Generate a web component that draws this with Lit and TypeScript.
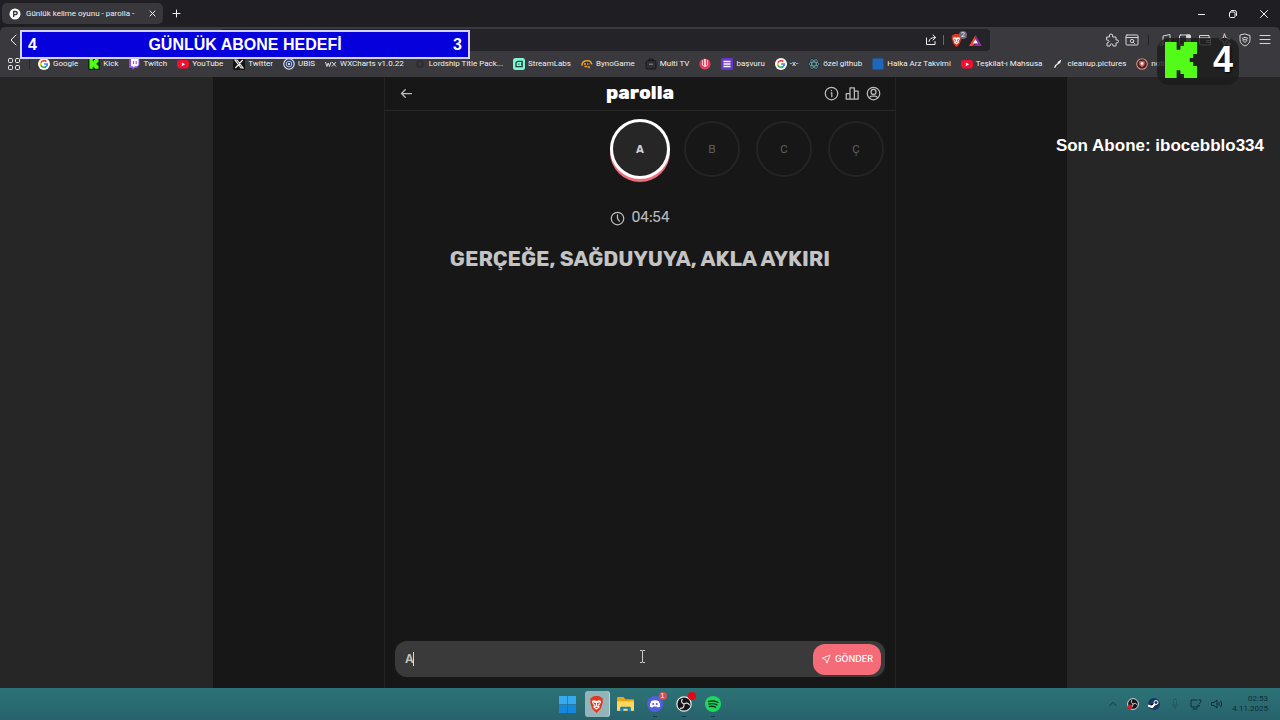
import { LitElement, html, css, svg, nothing } from "lit";
import { customElement, property } from "lit/decorators.js";

const line = (body: unknown, size = 16, box = 24, width = 2) => html`<svg width=${size} height=${size} viewBox="0 0 ${box} ${box}" fill="none" stroke="currentColor" stroke-width=${width} stroke-linecap="round" stroke-linejoin="round" aria-hidden="true">${body}</svg>`;
const art = (body: unknown, size = 12, box = 12) => html`<svg width=${size} height=${size} viewBox="0 0 ${box} ${box}" aria-hidden="true">${body}</svg>`;

const kickShape = svg`<path fill="#53fc18" d="M0 0h4v2.600h1.300V1.300h1.200V0H11v4H9.700v1.300H8.500v1.400h1.200V8H11v4H6.500v-1.300H5.300V9.400H4V12H0z"/>`;
const google = svg`<circle cx="6" cy="6" r="6" fill="#fff"/><g fill="none" stroke-width="1.7"><path stroke="#ea4335" d="M3 4.6A3.3 3.3 0 0 1 8.3 3.6"/><path stroke="#fbbc05" d="M3 4.5A3.4 3.4 0 0 0 3 7.5"/><path stroke="#34a853" d="M3 7.4A3.3 3.3 0 0 0 8.2 8.5"/><path stroke="#4285f4" d="M6.1 6h3.2A3.2 3.2 0 0 1 8.1 8.6"/></g>`;
const youtube = svg`<rect y="2" width="12" height="8.5" rx="2.4" fill="#f01030"/><path d="M4.9 4.4v3.8L8 6.3z" fill="#fff"/>`;

const favicons: Record<string, unknown> = {
  google,
  kick: svg`<rect width="12" height="12" rx="1" fill="#102a0c"/><g transform="translate(1.500 1) scale(.82)">${kickShape}</g>`,
  twitch: svg`<path fill="#9147ff" d="M1.5 0h10v7.3L8.7 10H6.6l-2 2v-2H1V2z"/><path fill="#fff" d="M3 1h7.5v5.7L9 8.2H7L5.4 9.7V8.2H3z"/><path stroke="#9147ff" stroke-width="1.1" d="M5.5 3v3M8.2 3v3"/>`,
  youtube,
  x: svg`<rect width="12" height="12" rx="1.5" fill="#141414"/><path stroke="#eee" stroke-width="1.2" fill="none" d="M2 2h2l6 8H8zM9.7 2 2.4 10"/>`,
  ubis: svg`<circle cx="6" cy="6" r="5.2" fill="#2c3a66" stroke="#e6e8f0" stroke-width="1.1"/><circle cx="6" cy="6" r="2.8" fill="none" stroke="#b9c4e4" stroke-width="1"/><circle cx="6" cy="6" r="1.1" fill="#fff"/>`,
  wx: svg`<path fill="none" stroke="#ddd" stroke-width="1" d="M.5 4l1.4 4.5L3.2 5l1.3 3.5L6 4M7 4l4 4.5M11 4 7 8.5"/>`,
  dim: svg`<circle cx="6" cy="6" r="3" fill="none" stroke="#2c2c30" stroke-width="1.5"/>`,
  streamlabs: svg`<rect width="12" height="12" rx="2.5" fill="#80f5d2"/><path fill="none" stroke="#17453e" stroke-width="1.3" d="M3 8.7V5.5Q3 3.4 5.4 3.4h3.8v5.3zM5.4 6.2h1M8 6.2h.7"/>`,
  byno: svg`<path fill="none" stroke="#f0a02c" stroke-width="1.5" d="M1 7.8Q.8 3.2 5.4 2.8 9.9 2 10.8 6.4M3 6h6M3.5 8.4h3M8 8v2.2"/><path stroke="#222" d="M5.5 4v3M8 4v3"/>`,
  multitv: svg`<rect x="1" y="2.7" width="10" height="8.3" rx="1.5" fill="#303034" stroke="#161618"/><path fill="none" stroke="#161618" d="M4 2.7V1h4v1.7"/><path stroke="#909094" d="M4 6.2h4"/>`,
  pink: svg`<circle cx="6" cy="6" r="5.6" fill="#dc415c"/><path stroke="#fff" stroke-width="1.4" d="M6 1v7"/><path fill="none" stroke="#ffc4cd" d="M3.5 2.3v4.9q2.5 3 5 0V2.3"/>`,
  form: svg`<rect width="12" height="12" rx="1.5" fill="#6936c7"/><path stroke="#fff" stroke-width="1.3" d="M2.5 3.5h7M2.5 6h7M2.5 8.5h7"/>`,
  react: svg`<rect width="12" height="12" rx="6" fill="#213438"/><g fill="none" stroke="#6f9ca5" stroke-width=".8"><ellipse cx="6" cy="6" rx="5" ry="2"/><ellipse cx="6" cy="6" rx="5" ry="2" transform="rotate(60 6 6)"/><ellipse cx="6" cy="6" rx="5" ry="2" transform="rotate(120 6 6)"/></g>`,
  blue: svg`<rect x=".5" y=".5" width="11" height="11" fill="#1d67bd"/>`,
  brush: svg`<path fill="#eee" d="m2 10 1-2.8 2.2-1.8 1-1.8 3.2-2L8.2 5 4.7 7.3 3.6 9.6z"/>`,
  noti: svg`<circle cx="6" cy="6" r="5.3" fill="#39282b" stroke="#d58b81" stroke-width="1.1"/><path fill="#ef6c64" d="M3.4 3.2h5.2v3.6L6 9.2 3.4 6.8z"/><circle cx="6" cy="5.5" r="1.2" fill="#fff"/>`,
};

const bookmarks: [string, string][] = [
  ["google", "Google"], ["kick", "Kick"], ["twitch", "Twitch"], ["youtube", "YouTube"], ["x", "Twitter"],
  ["ubis", "UBIS"], ["wx", "WXCharts v1.0.22"], ["dim", "Lordship Title Pack..."], ["streamlabs", "StreamLabs"],
  ["byno", "BynoGame"], ["multitv", "Multi TV"], ["pink", ""], ["form", "başvuru"], ["google", "-x-"],
  ["react", "özel github"], ["blue", "Halka Arz Takvimi"], ["youtube", "Teşkilat-ı Mahsusa"],
  ["brush", "cleanup.pictures"], ["noti", "notify ve Se"],
];

const lion = svg`<path fill="#e5371f" d="m4 1 2-1h4l2 1 2 1.6-.4 2 .4 1.2-2 6.2L8 16l-4-4-2-6.2.4-1.2-.4-2z"/><path fill="#fff" d="m4 4.4 2-.5 2 .7 2-.7 2 .5.2 1.8L10.4 9l.6 1.5L8 13l-3-2.5L5.6 9 3.8 6.2z"/><path fill="none" stroke="#e5371f" d="m5 6.4 2 .8-.4 2M11 6.4l-2 .8.4 2M7 10.7h2"/>`;

@customElement("browser-chrome")
export class BrowserChrome extends LitElement {
  static styles = css`
    :host { display: block; min-width: 0; background: #1f1e23; color: #f1f1f2; font: 8px/12px Roboto, "Open Sans", sans-serif; }
    button { background: none; border: 0; padding: 0; color: inherit; font: inherit; display: grid; place-items: center; }
    svg { display: block; flex: none; }
    .strip { display: flex; align-items: center; height: 27px; padding: 0 2px; gap: 9px; }
    .tab { display: flex; align-items: center; gap: 5px; width: 161px; height: 21px; box-sizing: border-box; padding: 0 6px 0 7px; background: #38373b; border-radius: 5px; }
    .name { flex: 1; white-space: nowrap; overflow: hidden; }
    .window { margin-left: auto; display: flex; gap: 19px; padding-right: 8px; }
    .tools { background: #3a393d; border-radius: 5px 5px 0 0; height: 50px; }
    .row { display: flex; align-items: center; height: 26px; padding: 0 8px; }
    .address { display: flex; align-items: center; gap: 6px; flex: 1; min-width: 0; height: 22px; margin-left: 200px; background: #242328; border-radius: 4px; box-sizing: border-box; padding-right: 8px; }
    .url { flex: 1; min-width: 0; background: none; border: 0; outline: 0; color: inherit; font: inherit; }
    .sep { width: 1px; height: 10px; background: #67666b; }
    .shield { position: relative; }
    .count { position: absolute; top: -3px; right: -4px; width: 8px; height: 8px; border-radius: 4px; background: #686d83; font-size: 7px; line-height: 8px; text-align: center; }
    .extensions { display: flex; align-items: center; gap: 6px; margin-left: 115px; color: #d6d6d8; }
    .extensions .sep { background: #242428; margin: 0 3px; }
    .bookmarks { display: flex; align-items: center; gap: 10px; height: 21px; padding: 0 7px; white-space: nowrap; overflow: hidden; }
    .bookmarks a { display: flex; align-items: center; gap: 3px; color: inherit; text-decoration: none; }
    .divider { width: 1px; height: 10px; background: #29292d; margin: 0 -2px; }
  `;
  render() {
    return html`
      <div class="strip">
        <div class="tab">${art(svg`<circle cx="6" cy="6" r="5.5" fill="#fff"/><path fill="none" stroke="#333" stroke-width="1.3" d="M4.7 9V3.5h1.5q2 0 2 1.6t-2 1.6H4.7"/>`)}
          <span class="name">Günlük kelime oyunu - parolla -</span>
          <button aria-label="Sekmeyi kapat">${line(svg`<path d="m2 2 5 5M7 2 2 7"/>`, 9, 9, 1)}</button>
        </div>
        <button aria-label="Yeni sekme">${line(svg`<path d="M4.5 1v7M1 4.5h7"/>`, 9, 9, 1)}</button>
        <div class="window">
          <button aria-label="Simge durumuna küçült">${line(svg`<path d="M2.500 6.500h6"/>`, 12, 12, 1)}</button>
          <button aria-label="Önceki boyut">${line(svg`<rect x="2.5" y="4" width="5.5" height="5.5" rx="1"/><path d="M4.5 2.5h3q2 0 2 2v3"/>`, 12, 12, 1)}</button>
          <button aria-label="Kapat">${line(svg`<path d="m2.5 2.5 7 7M9.5 2.5l-7 7"/>`, 12, 12, 1)}</button>
        </div>
      </div>
      <div class="tools">
        <div class="row">
          <button aria-label="Geri">${line(svg`<path d="M8 1 3 6l5 5"/>`, 12, 12, 1)}</button>
          <div class="address">
            <input class="url" aria-label="Adres çubuğu" />
            ${line(svg`<path d="M1.5 4v6.5H10V7.5M4 7.5q.3-4 6-4M8 1l2.7 2.5L8 6"/>`, 12, 12, 1)}
            <span class="sep"></span>
            <button class="shield" aria-label="Kalkanlar">${art(lion, 13, 16)}<span class="count">2</span></button>
            <button aria-label="Ödüller">${art(svg`<path fill="#f1482b" d="M6.5 1 0 12h4l2.7-5z"/><path fill="#8b2ca2" d="M6.5 1 13 12 4 12l2.5-2h2.7L6.5 5z"/><path fill="#fff" d="m6.5 5.3 2.6 4.3H3.9z"/>`, 13, 13)}</button>
          </div>
          <div class="extensions">
            ${line(svg`<path d="M2 4h2.5q-1-3 1.5-3t1.6 3H11v3q2.5-.7 2.5 1.3T11 10v3H8q.3-2.2-1.4-2.2T5 13H2v-3q2 0 2-1.6T2 7z"/>`, 14, 14, 1)}
            ${line(svg`<rect x="1" y="2" width="12" height="10" rx="1"/><path d="M1 4.5h12"/><circle cx="7" cy="8" r="1.7"/><path d="m8.5 9.5 1 1"/>`, 14, 14, 1)}
            <span class="sep"></span>
            ${line(svg`<path d="M5 11V3l7-1.5v8.3"/><circle cx="3.5" cy="11" r="1.6"/><circle cx="10.5" cy="10" r="1.6"/>`, 14, 14, 1)}
            ${line(svg`<rect x="1.5" y="2" width="11" height="10" rx="1"/><path fill="currentColor" d="M9 2h3v10H9z"/>`, 14, 14, 1)}
            ${line(svg`<path d="M2 2.5h9V5h1.5v7h-9Q1.5 12 1.5 10V3M2 5h9M9 7.5h3.5v2H9z"/>`, 14, 14, 1)}
            ${line(svg`<path d="M6.5 1 8 5l4 1.2L8 8l-1.5 4L5 8 1 6.2 5 5zM9 11h4M11 9v4"/>`, 14, 14, 1)}
            ${line(svg`<path d="m7 1 5 1.5v4Q12 11 7 13 2 11 2 6.5v-4z"/><path d="M4.3 5.2q2.7-2 5.4 0M5.2 6.7h3.6v1L7 9.6 5.2 7.7z"/>`, 14, 14, 1)}
            ${line(svg`<path d="M2 2.500h10M2 6.500h10M2 10.500h10"/>`, 14, 14, 1)}
          </div>
        </div>
        <nav class="bookmarks" aria-label="Yer imleri">
          <button aria-label="Tüm yer imleri">${line(svg`<rect x="1.500" y="1.500" width="4" height="4" rx="1"/><rect x="8.500" y="1.500" width="4" height="4" rx="1"/><rect x="1.500" y="8.500" width="4" height="4" rx="1"/><rect x="8.500" y="8.500" width="4" height="4" rx="1"/>`, 14, 14, 1)}</button>
          <span class="divider"></span>
          ${bookmarks.map(([icon, name]) => html`<a href="#" aria-label=${name || "Yer imi"}>${art(favicons[icon])}${name ? html`<span>${name}</span>` : nothing}</a>`)}
        </nav>
      </div>`;
  }
}

@customElement("letter-ring")
export class LetterRing extends LitElement {
  @property() letter = "";
  @property({ type: Boolean, reflect: true }) active = false;
  static styles = css`
    :host { display: grid; place-items: center; width: 72px; height: 64px; flex: none; }
    .ring { display: grid; place-items: center; width: 56px; height: 56px; box-sizing: border-box; border: 2px solid #242424; border-radius: 50%; font-size: 11px; color: #5c5c5c; }
    :host([active]) .ring { width: 60px; height: 60px; border: 3px solid #fff; background: #262626; color: #cfcfcf; font-weight: 700; box-shadow: 0 3px 0 #ef6b7b; }
  `;
  render() { return html`<span class="ring">${this.letter}</span>`; }
}

@customElement("parolla-game")
export class ParollaGame extends LitElement {
  static styles = css`
    :host { display: flex; justify-content: center; min-width: 0; background: #262626; color: #bdbdbd; font-family: Rubik, Inter, sans-serif; }
    svg { display: block; }
    .stage { display: flex; justify-content: center; width: 66.7%; background: #171717; }
    .panel { display: flex; flex-direction: column; width: 100%; max-width: 512px; box-sizing: border-box; border: solid #232323; border-width: 0 1px; }
    header { display: grid; grid-template-columns: 1fr auto 1fr; align-items: center; height: 34px; padding: 0 14px; border-bottom: 1px solid #262626; box-sizing: border-box; }
    h1 { margin: 0; padding-bottom: 2px; font-size: 19px; line-height: 20px; font-weight: 800; color: #fff; }
    header button { background: none; border: 0; padding: 0; color: inherit; justify-self: start; }
    .actions { display: flex; gap: 6px; justify-content: flex-end; }
    .letters { display: flex; padding: 6px 0 0 calc(50% - 36px); overflow: hidden; height: 70px; }
    .timer { display: flex; justify-content: center; align-items: center; gap: 6px; margin-top: 22px; font-size: 14px; line-height: 18px; }
    h2 { margin: 20px 0 0; text-align: center; font-size: 21px; line-height: 24px; font-weight: 700; color: #c4c4c4; }
    form { position: relative; display: flex; align-items: center; height: 36px; box-sizing: border-box; margin: auto 10px 11px; padding: 0 4px 0 10px; background: #3a3a3a; border-radius: 12px; }
    input { flex: 1; min-width: 0; background: none; border: 0; outline: 0; padding: 0; color: #c6c6c6; font: 600 12px/16px Inter, sans-serif; }
    .caret { position: absolute; left: 18px; top: 11px; width: 1px; height: 14px; background: #d8d8d8; }
    .send { display: flex; align-items: center; justify-content: center; gap: 4px; width: 68px; height: 31px; border: 0; border-radius: 12px; padding: 0; background: #f56b78; color: #fff; font: 500 9px/12px Inter, sans-serif; }
  `;
  render() {
    const letters = ["A", "B", "C", "Ç"];
    return html`<main class="stage"><div class="panel">
      <header>
        <button aria-label="Geri">${line(svg`<path d="M20 12H4M10 6l-6 6 6 6"/>`, 15)}</button>
        <h1>parolla</h1>
        <div class="actions">
          <button aria-label="Nasıl oynanır">${line(svg`<circle cx="12" cy="12" r="10"/><path d="M11.5 11h1v6M12 7v.5"/>`, 15)}</button>
          <button aria-label="İstatistikler">${line(svg`<path d="M2 21V12h6v9zM8 21V3h7v18zM15 21V8h6v13z"/>`, 15)}</button>
          <button aria-label="Profil">${line(svg`<circle cx="12" cy="12" r="10"/><circle cx="12" cy="9.5" r="4"/><path d="M5.5 19q1-3 4-3h5q3 0 4 3"/>`, 15)}</button>
        </div>
      </header>
      <div class="letters">${letters.map((l, i) => html`<letter-ring letter=${l} ?active=${i === 0}></letter-ring>`)}</div>
      <div class="timer">${line(svg`<circle cx="12" cy="12" r="10"/><path d="M12 6v6l3 4"/>`, 15)}<time>04:54</time></div>
      <h2>GERÇEĞE, SAĞDUYUYA, AKLA AYKIRI</h2>
      <form @submit=${(e: Event) => e.preventDefault()}>
        <input aria-label="Cevap" .value=${"A"} autocomplete="off" spellcheck="false" />
        <span class="caret"></span>
        <button class="send">${line(svg`<path d="M21 3 3 10l8 3 3 8z"/>`, 10)}GÖNDER</button>
      </form>
    </div></main>`;
  }
}

const obs = svg`<circle cx="10" cy="10" r="9" fill="#181519" stroke="#eee" stroke-width="1.5"/><g fill="none" stroke="#ddd" stroke-width="1.5"><path d="M10 10Q5 8 8 3.5M10 10q4.500-3 7 1.500M10 10q.5 6-5 5.500"/></g>`;

@customElement("task-bar")
export class TaskBar extends LitElement {
  static styles = css`
    :host { display: grid; min-width: 0; grid-template-columns: 1fr auto 1fr; align-items: center; height: 32px; background: linear-gradient(#2c7376, #28626d); color: #102c35; font: 8px/10px Roboto, "Open Sans", sans-serif; }
    svg { display: block; }
    button { position: relative; display: grid; place-items: center; width: 24px; height: 26px; border: 0; border-radius: 3px; padding: 0; background: none; }
    .apps { grid-column: 2; display: flex; gap: 5px; }
    .open { background: #92b5ba; box-shadow: 1px 0 0 #c3d7da; }
    .running::after { content: ""; position: absolute; bottom: 0; width: 4px; height: 1px; background: #123f47; }
    .badge { position: absolute; right: 0; top: 1px; width: 8px; height: 8px; border-radius: 4px; background: #dc4b57; color: #fff; font-size: 7px; line-height: 8px; }
    .badge.rec { background: #e60714; }
    .tray { display: flex; align-items: center; justify-content: flex-end; gap: 9px; padding-right: 12px; }
    .faint { opacity: .3; }
    .clock { text-align: right; }
  `;
  render() {
    return html`
      <div class="apps">
        <button aria-label="Başlat">${art(svg`<g fill="#38a9ee"><path d="M0 0h7.700v7.700H0zM8.300 0H16v7.700H8.300z"/><path fill="#1688dc" d="M0 8.300h7.700V16H0zM8.300 8.300H16V16H8.300z"/></g>`, 17, 16)}</button>
        <button class="open" aria-label="Brave">${art(lion, 17, 16)}</button>
        <button aria-label="Dosya Gezgini">${art(svg`<path fill="#e6a817" d="M0 2q0-1 1-1h5l2 2h7q1 0 1 1v3H0z"/><path fill="#ffd75a" d="M0 5h16v9H0z"/><path fill="#1680bb" d="M3 14.500V11q0-1 1-1h8q1 0 1 1v3.500h-3V12H6v2.500z"/>`, 17, 16)}</button>
        <button class="running" aria-label="Discord">${art(svg`<circle cx="9" cy="9" r="9" fill="#5360dc"/><path fill="#fff" d="M5 5.500q4-1.600 8 0 2 3 1.700 6.200Q13 13 12 13l-1-1.300H7L6 13q-1 0-2.700-1.300Q3 8.500 5 5.500z"/><circle cx="7" cy="9" r="1.200" fill="#5360dc"/><circle cx="11" cy="9" r="1.200" fill="#5360dc"/>`, 16, 18)}<span class="badge">1</span></button>
        <button class="running" aria-label="OBS">${art(obs, 16, 20)}<span class="badge rec"></span></button>
        <button class="running" aria-label="Spotify">${art(svg`<circle cx="9" cy="9" r="9" fill="#1ed760"/><path fill="none" stroke="#14371f" stroke-linecap="round" stroke-width="1.600" d="M4 6.200q5.500-1.500 10.500 1M4.500 9q4.500-1.200 9 1M5 11.800q3.500-1 7 .8"/>`, 16, 18)}</button>
      </div>
      <div class="tray">
        ${line(svg`<path d="m2 8 4-4 4 4"/>`, 10, 12, 1)}
        ${art(svg`${obs}<circle cx="5" cy="15" r="4" fill="#d4202c"/>`, 12, 20)}
        ${art(svg`<circle cx="6" cy="6" r="6" fill="#173761"/><path stroke="#fff" stroke-width="2" d="M0 7.500 4 9l4-4"/><circle cx="8" cy="4.500" r="2" fill="#173761" stroke="#fff"/><circle cx="4" cy="8.800" r="1.300" fill="#fff"/>`)}
        <span class="faint">${line(svg`<rect x="4.500" y="1" width="3" height="6" rx="1.500"/><path d="M3 6q0 3 3 3t3-3M6 9v2"/>`, 12, 12, 1)}</span>
        ${line(svg`<path d="M7 2H1v7h7V7M3 11h4M9 2q2-1 2 1T9.500 5.500M9.500 7.500v.5"/>`, 12, 12, 1)}
        ${line(svg`<path d="M1 4.500h2L6 2v8L3 7.500H1zM8 4.500q1 1.500 0 3M9.800 3q2 3 0 6"/>`, 12, 12, 1)}
        <div class="clock">02:53<br />4.11.2025</div>
      </div>`;
  }
}

@customElement("app-root")
export class AppRoot extends LitElement {
  static styles = css`
    :host { position: relative; display: grid; grid-template-columns: minmax(0, 1fr); grid-template-rows: auto 1fr auto; min-height: 100vh; overflow: hidden; }
    .overlay { position: absolute; color: #fff; font-family: "Liberation Sans", Arial, sans-serif; font-weight: 700; }
    .goal { left: 20px; top: 30px; width: 450px; height: 29px; box-sizing: border-box; display: flex; align-items: center; justify-content: space-between; padding: 0 6px; border: 2px solid #d4d3f5; background: #0600dc; font-size: 16px; line-height: 20px; }
    .viewers { right: 41px; top: 38px; width: 82px; height: 47px; box-sizing: border-box; display: flex; align-items: center; justify-content: space-between; padding: 0 6px 3px 8px; border-radius: 12px; background: rgba(28, 28, 28, .8); font-size: 36px; line-height: 36px; text-shadow: 1px 1px 2px #000; }
    .latest { right: 16px; top: 136px; font-size: 17px; line-height: 20px; }
    .pointer { left: 50%; top: 650px; color: #ccc; }
    svg { display: block; }
  `;
  render() {
    return html`
      <browser-chrome></browser-chrome>
      <parolla-game></parolla-game>
      <task-bar></task-bar>
      <div class="overlay goal"><span>4</span><span>GÜNLÜK ABONE HEDEFİ</span><span>3</span></div>
      <div class="overlay viewers"><svg width="32" height="36" viewBox="0 0 11 12" preserveAspectRatio="none" aria-hidden="true">${kickShape}</svg><span>4</span></div>
      <div class="overlay latest">Son Abone: ibocebblo334</div>
      <div class="overlay pointer"><svg width="5" height="13" viewBox="0 0 5 13" fill="none" stroke="currentColor" aria-hidden="true"><path d="M0 .5h2l.5.5.5-.5h2M2.500 1v11M0 12.500h2l.5-.5.5.5h2"/></svg></div>`;
  }
}
